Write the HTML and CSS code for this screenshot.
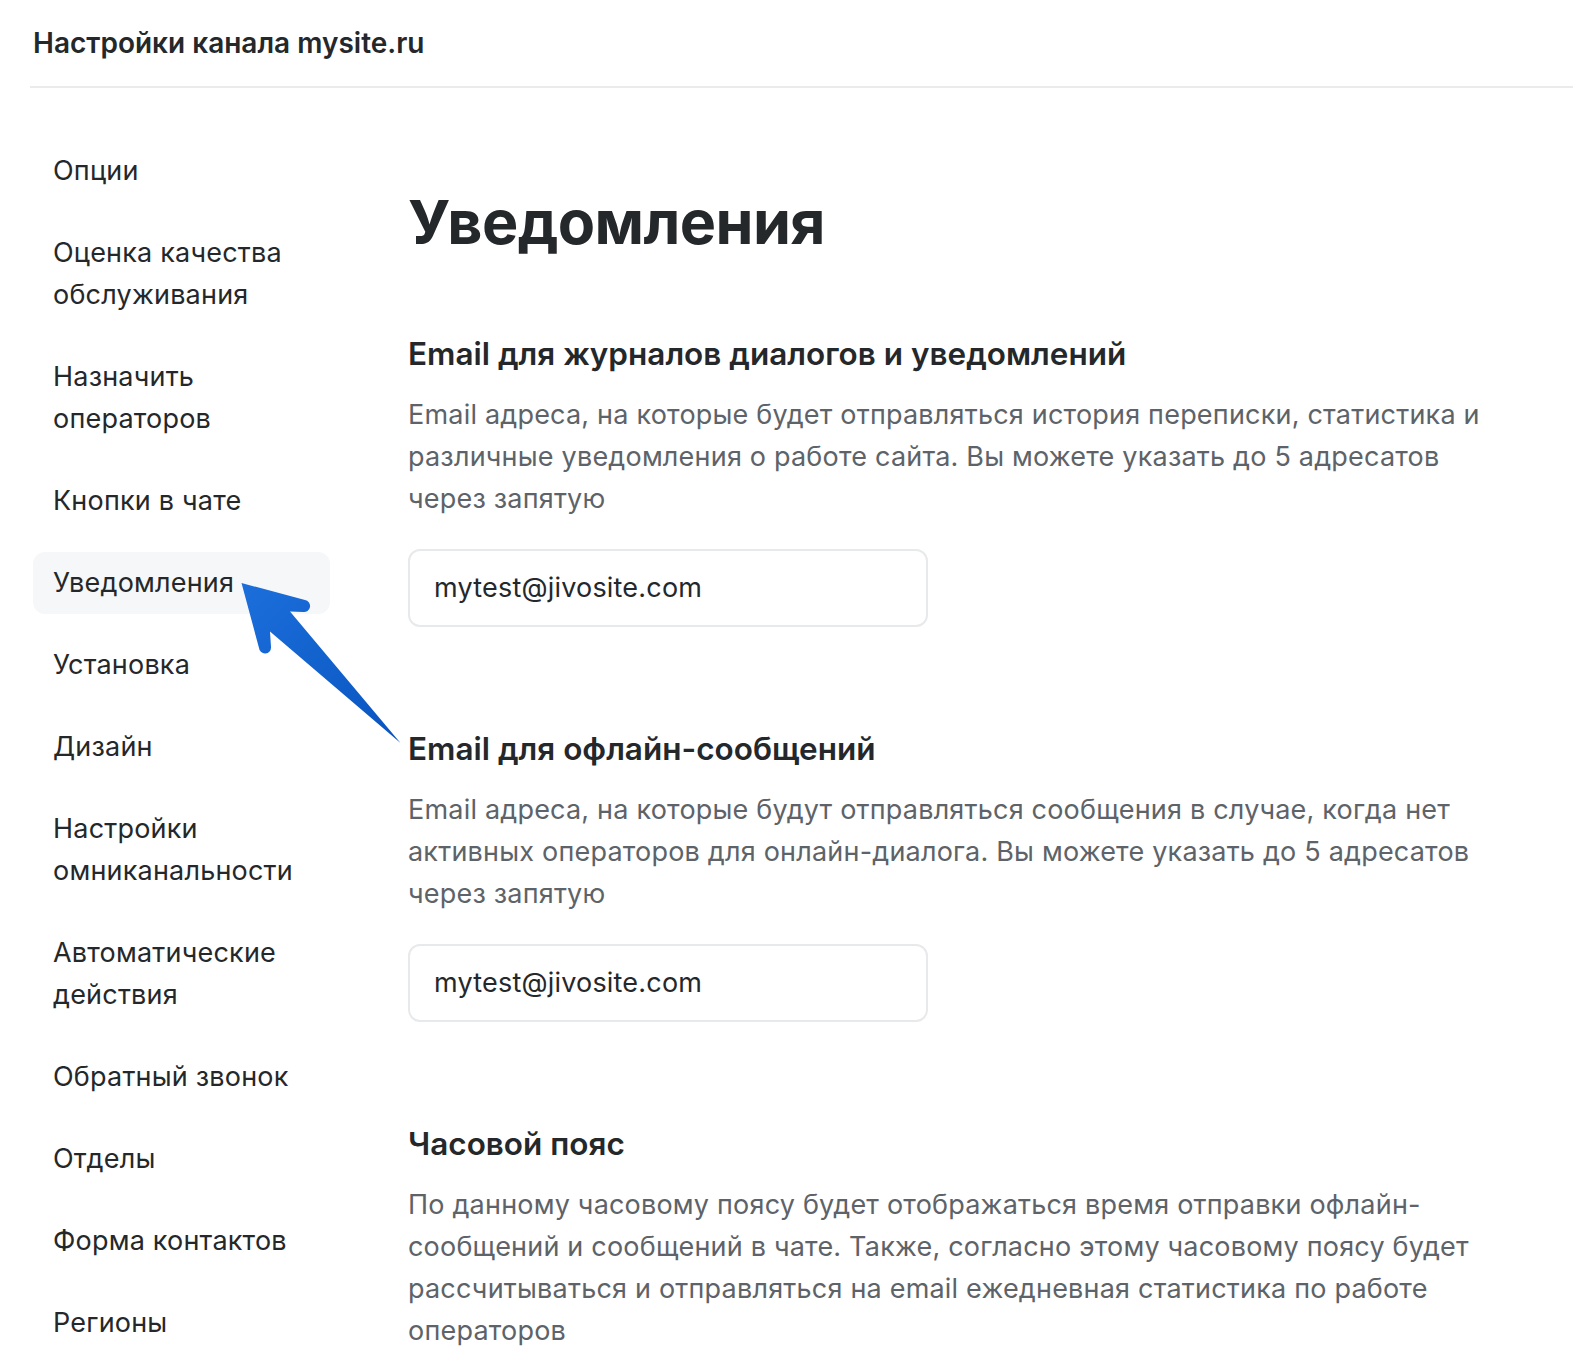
FILE: index.html
```html
<!DOCTYPE html>
<html lang="ru">
    <head>
        <meta charset="UTF-8">
        <title>Настройки канала mysite.ru</title>
        <link rel="stylesheet" href="styles.css">
    </head>
    <body>
        <header class="top">Настройки канала mysite.ru</header>
        <div class="layout">
            <nav class="menu">
                <div class="item">Опции</div>
                <div class="item">Оценка качества обслуживания</div>
                <div class="item">Назначить операторов</div>
                <div class="item">Кнопки в чате</div>
                <div class="item active">Уведомления</div>
                <div class="item">Установка</div>
                <div class="item">Дизайн</div>
                <div class="item">Настройки омниканальности</div>
                <div class="item">Автоматические действия</div>
                <div class="item">Обратный звонок</div>
                <div class="item">Отделы</div>
                <div class="item">Форма контактов</div>
                <div class="item">Регионы</div>
            </nav>
            <main class="content">
                <h1>Уведомления</h1>
                <section class="block">
                    <h2>Email для журналов диалогов и уведомлений</h2>
                    <p>Email адреса, на которые будет отправляться история переписки, статистика и различные уведомления о работе сайта. Вы можете указать до 5 адресатов через запятую</p>
                    <div class="field">mytest@jivosite.com</div>
                </section>
                <section class="block">
                    <h2>Email для офлайн-сообщений</h2>
                    <p>Email адреса, на которые будут отправляться сообщения в случае, когда нет активных операторов для онлайн-диалога. Вы можете указать до 5 адресатов через запятую</p>
                    <div class="field">mytest@jivosite.com</div>
                </section>
                <section class="block">
                    <h2>Часовой пояс</h2>
                    <p>По данному часовому поясу будет отображаться время отправки офлайн-сообщений и сообщений в чате. Также, согласно этому часовому поясу будет рассчитываться и отправляться на email ежедневная статистика по работе операторов</p>
                </section>
            </main>
        </div>
        <svg class="pointer" width="1584" height="1372" viewBox="0 0 1584 1372">
            <defs>
                <linearGradient id="arrowFill" x1="0" y1="0" x2="1" y2="1">
                    <stop offset="0" stop-color="#1c6fdb"/>
                    <stop offset="1" stop-color="#0854c0"/>
                </linearGradient>
            </defs>
            <path d="M241.5 583 L305 600 A6 6 0 0 1 303 612 L290 611.5 L400.5 743 L270 631.5 L271 647 A6 6 0 0 1 259 648 Z" fill="url(#arrowFill)"/>
        </svg>
    </body>
</html>
```

FILE: styles.css
```css
body {
    margin: 0;
    font-family: Inter, "Noto Sans", sans-serif;
    color: #25282b;
    background: #fff;
}
.top {
    margin: 0 11px 0 30px;
    padding-left: 3px;
    height: 86px;
    line-height: 86px;
    font-size: 28px;
    font-weight: 600;
    border-bottom: 2px solid #ebebeb;
}
.layout {
    display: grid;
    grid-template-columns: 297px 1fr;
    column-gap: 78px;
    padding-left: 33px;
}
.menu {
    display: flex;
    flex-direction: column;
    gap: 20px;
    padding-top: 52px;
}
.item {
    padding: 10px 20px;
    font-size: 27px;
    letter-spacing: 0.2px;
    line-height: 42px;
    border-radius: 12px;
}
.item.active {
    background: #f6f7f8;
}
.content {
    padding-top: 96px;
    max-width: 1100px;
}
h1 {
    margin: 0 0 74px;
    font-size: 61px;
    letter-spacing: -0.6px;
    line-height: 76px;
    font-weight: 700;
}
.block + .block {
    margin-top: 102px;
}
h2 {
    margin: 0;
    font-size: 31.5px;
    line-height: 40px;
    font-weight: 600;
}
p {
    margin: 20px 0 0;
    font-size: 27px;
    letter-spacing: 0.2px;
    line-height: 42px;
    color: #5d6368;
}
.field {
    margin-top: 29px;
    width: 520px;
    height: 78px;
    box-sizing: border-box;
    border: 2px solid #e8e9eb;
    border-radius: 12px;
    padding-left: 24px;
    font-size: 27px;
    letter-spacing: 0.2px;
    line-height: 74px;
}
.pointer {
    position: absolute;
    left: 0;
    top: 0;
    pointer-events: none;
}
```
